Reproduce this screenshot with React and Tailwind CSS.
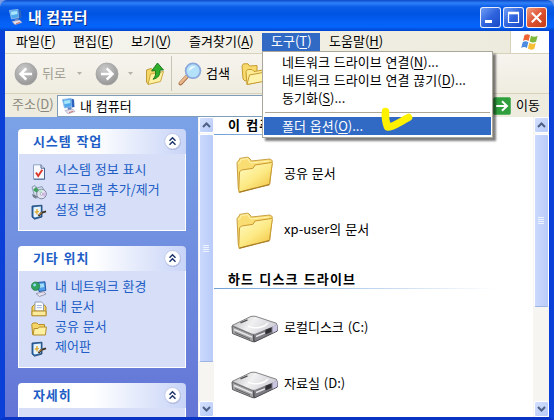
import React from "react";

const Key = ({ children }) => (
  <>
    (<span className="underline underline-offset-2 decoration-1">{children}</span>)
  </>
);

/* ---------- icons ---------- */

const ComputerIcon = ({ className }) => (
  <svg viewBox="0 0 14 16" className={className}>
    <path d="M0.5 1.5 L9 0.5 L10 8.5 L2.5 10 Z" fill="#4fa8ec" stroke="#8db9ea" />
    <path d="M2 2.8 L8 2 L8.6 5 L2.4 6.2 Z" fill="#a7e6fb" />
    <path d="M9.5 0.5 L12 1.5 L12.5 9 L10 9.5 Z" fill="#2d63bd" />
    <path d="M5.5 9.5 L9.5 9 L9.5 12 L6 12.5 Z" fill="#5b86c9" />
    <path d="M3 12.5 L10.5 11 L13 13.5 L6 15.7 Z" fill="#e3e1ec" stroke="#9a93b0" strokeWidth="0.6" />
    <path d="M7 14.6 l4 -1.2" stroke="#d55b4a" strokeWidth="0.8" />
  </svg>
);

const WindowsFlag = () => (
  <svg viewBox="0 0 20 18" className="w-5 h-[18px]">
    <path d="M4.4 2.2 C6.2 0.8 8 0.8 10 2.2 L8.6 8 C6.6 6.8 4.8 6.8 3 8 Z" fill="#ee6435" />
    <path d="M11 2.8 C13 4 15.2 4.2 17.6 2.8 L16.1 8.8 C14 10 11.8 9.8 9.6 8.6 Z" fill="#7fb83c" />
    <path d="M2.7 9.2 C4.6 8 6.5 8 8.3 9.2 L6.9 15 C5 13.7 3 13.8 1.2 15 Z" fill="#4c8be0" />
    <path d="M9.3 9.8 C11.3 11 13.5 11.2 15.8 9.9 L14.3 15.8 C12 17.1 10 16.8 7.9 15.6 Z" fill="#f8bf36" />
  </svg>
);

const NavCircle = ({ flip }) => (
  <svg viewBox="0 0 24 24" className="w-6 h-6 shrink-0">
    <defs>
      <radialGradient id="navGray" cx="40%" cy="30%" r="75%">
        <stop offset="0" stopColor="#cccccc" />
        <stop offset="1" stopColor="#929292" />
      </radialGradient>
    </defs>
    <circle cx="12" cy="12" r="11" fill="url(#navGray)" stroke="#a5a5a5" strokeWidth="0.8" />
    <path
      d="M18 12 H7.5 M12.3 6.4 L6.6 12 L12.3 17.6"
      transform={flip ? "rotate(180 12 12)" : undefined}
      fill="none"
      stroke="#fff"
      strokeWidth="2.6"
    />
  </svg>
);

const SmallCaret = ({ className }) => (
  <svg viewBox="0 0 5 3" className={`w-[5px] h-[3px] shrink-0 ${className}`}>
    <path d="M0 0 H5 L2.5 3 Z" fill="#b5b3a8" />
  </svg>
);

const UpFolderIcon = () => (
  <svg viewBox="0 0 20 24" className="w-5 h-6 shrink-0">
    <path d="M1.5 8 L6 6.5 L8 8 L14 7 L14 19 L3 22 L1.5 20 Z" fill="#f6d765" stroke="#b9922b" strokeWidth="0.9" />
    <path d="M3 22.5 L5.5 12 L18.5 9.5 L15.5 19.5 Z" fill="#fdf0a0" stroke="#c79f35" strokeWidth="0.9" />
    <path d="M12.5 1 L18.5 8 L15 8 C15.4 13 13 16.3 8 17.2 C10.6 14.6 11 12 10.4 8.6 L6.6 9 Z" fill="#2fae2b" stroke="#16721a" strokeWidth="0.9" />
  </svg>
);

const SearchIcon = () => (
  <svg viewBox="0 0 24 24" className="w-6 h-6 shrink-0">
    <path d="M2.6 21.4 L8.6 14.8" stroke="#a9744c" strokeWidth="4" strokeLinecap="round" />
    <path d="M2.6 20.8 L8.4 14.6" stroke="#eab88a" strokeWidth="2.6" strokeLinecap="round" />
    <circle cx="15" cy="8.8" r="7.4" fill="#b5e2fb" stroke="#8ba8dc" strokeWidth="1.7" />
    <path d="M10.5 9 C11 5 14 3.6 17.5 4.6 C15 6 13 7.5 10.5 9 Z" fill="#effaff" />
  </svg>
);

const FoldersIcon = () => (
  <svg viewBox="0 0 24 24" className="w-6 h-6 shrink-0">
    <path d="M1 4 L2.5 1.8 H7 L8.5 4 L16 3.5 V16 L4 19 L2 17 Z" fill="#f8da6c" stroke="#c69b31" />
    <path d="M5 9.5 L6.5 7.5 H11 L13 9.5 L22 8 V19 L6 22.5 Z" fill="#fdeb94" stroke="#c69b31" />
    <path d="M8.5 13 L22 10.5 V19.5 L6 22.5 Z" fill="#fff3ab" stroke="#c69b31" />
  </svg>
);

const GoIcon = () => (
  <svg viewBox="0 0 18 18" className="w-[18px] h-[18px] shrink-0">
    <rect x="0.5" y="0.5" width="17" height="17" rx="1.5" fill="#2f9e3c" stroke="#5db566" />
    <path d="M3 9 H13.5 M9 4.2 L14 9 L9 13.8" fill="none" stroke="#fff" strokeWidth="2" />
  </svg>
);

const FolderLarge = () => (
  <svg viewBox="0 0 38 38" className="w-[38px] h-[38px] shrink-0">
    <defs>
      <linearGradient id="folderFront" x1="0" y1="0" x2="0.8" y2="1">
        <stop offset="0" stopColor="#fffbc6" />
        <stop offset="0.55" stopColor="#fdea86" />
        <stop offset="1" stopColor="#f2c545" />
      </linearGradient>
    </defs>
    <path d="M1 6.5 L3.2 4 L3.7 2.4 L11.5 1.2 L13.3 2 L15.5 5 L34 3 L36.3 4.7 L33.8 28 L3.5 35 L2.3 33 Z" fill="#f9dc72" stroke="#c8a044" />
    <path d="M2 8 L4.5 6 L5 3.5 L11.5 2.6 L14.5 7 L33 5" fill="none" stroke="#fff4b5" />
    <path d="M3.5 16 L5.5 14 L17 12.3 L19 9 L35.5 6.5 L36.3 7.5 L33.3 28.5 L3 36.4 L2.8 33 Z" fill="url(#folderFront)" stroke="#c99b32" />
    <path d="M3.5 36.2 L33.3 28.6" stroke="#a87e28" strokeWidth="1.2" />
  </svg>
);

const DriveIcon = () => (
  <svg viewBox="0 0 48 28" className="w-12 h-7 shrink-0">
    <defs>
      <linearGradient id="driveTop" x1="0" y1="0" x2="1" y2="0.3">
        <stop offset="0" stopColor="#b9b9bb" />
        <stop offset="0.5" stopColor="#f1f1f2" />
        <stop offset="1" stopColor="#d2d1d8" />
      </linearGradient>
    </defs>
    <path d="M1 11 L22.5 20 L22.5 27 L20 26 L1.5 18.5 Z" fill="#a3a3a5" stroke="#5c5c5e" />
    <path d="M22.5 19.5 L46 10 L46.4 16 L23.5 27 Z" fill="#7d7c82" stroke="#4c4b51" />
    <path d="M1 10.5 L20 1.4 L24 1.2 L45.5 8.3 L46 10.2 L24 19.4 L21 19.2 Z" fill="url(#driveTop)" stroke="#77777b" strokeWidth="0.9" />
    <path d="M3 14.5 L21 22.2 M25 21.5 L34 17.8" stroke="#e8e8ea" strokeWidth="1.4" />
    <path d="M4 17.6 L19 24" stroke="#515153" strokeWidth="0.8" />
    <path d="M34.5 14.8 L40.5 12.4 V16.8 L34.5 19.6 Z" fill="#2e2d34" />
    <path d="M41.5 11.5 L46 9.7 L46.4 15.4 L41.5 18 Z" fill="#cbc5e2" />
    <path d="M9.5 7.9 L16.5 4.9" stroke="#4d4d50" strokeWidth="1.2" />
    <path d="M17 11 C23 15 34 12 37 8" fill="none" stroke="#fff" strokeWidth="1.3" />
  </svg>
);

const CheckDocIcon = () => (
  <svg viewBox="0 0 16 16" className="w-4 h-4 shrink-0">
    <path d="M2.5 0.8 H10 L13.5 4.2 V15.2 H2.5 Z" fill="#f7faff" stroke="#8fa3c4" />
    <path d="M10 0.8 V4.2 H13.5 L13.5 15.2 H3" fill="none" stroke="#4c6391" />
    <path d="M5 8.5 L7.2 12 L11.3 5.8" fill="none" stroke="#dc3a2d" strokeWidth="2" />
  </svg>
);

const ProgramsIcon = () => (
  <svg viewBox="0 0 16 16" className="w-4 h-4 shrink-0">
    <path d="M1 3 L4 1.5 L6 4 L11 2.5 L13 6 L11 13 L4 14 Z" fill="#d3dfee" stroke="#7b8ba5" strokeWidth="0.8" />
    <path d="M2 6 L5 3 L8 6 L6 9 Z" fill="#3fa05a" />
    <path d="M1 10 L6 12 L5 14.5 L2 13 Z" fill="#737b8c" />
    <circle cx="10.5" cy="10" r="4.8" fill="#e4e4f1" stroke="#747c97" strokeWidth="0.9" />
    <path d="M10.5 10 L14.5 8 A4.6 4.6 0 0 1 13.5 13 Z" fill="#d4b9e6" />
    <path d="M10.5 10 L7 7.5 A4.6 4.6 0 0 1 11 5.6 Z" fill="#b9e5c9" />
    <circle cx="10.5" cy="10" r="1.3" fill="#fff" stroke="#868ca4" strokeWidth="0.6" />
  </svg>
);

const ControlPanelIcon = () => (
  <svg viewBox="0 0 16 16" className="w-4 h-4 shrink-0">
    <path d="M1 2 L11 1.2 V13 L3.5 15.2 L1 13 Z" fill="#2f6cab" stroke="#1a3f70" strokeWidth="0.8" />
    <path d="M2.5 3.2 L9.8 2.6 V12 L3.8 13.6 L2.5 12.4 Z" fill="#e8f4fc" />
    <path d="M6 5 V10.5 M3.8 8 L8 7.6" stroke="#e0ad3a" strokeWidth="1.4" />
    <path d="M7.5 12 L10.5 8.8 L15 7.4" fill="none" stroke="#3d3428" strokeWidth="2" />
    <path d="M8 11 L11 8.4" stroke="#cf8a35" strokeWidth="1" />
  </svg>
);

const NetworkIcon = () => (
  <svg viewBox="0 0 16 16" className="w-4 h-4 shrink-0">
    <path d="M6 1.5 L14 0.8 L14.8 9.5 L8 10.5 Z" fill="#4c9fe8" stroke="#234f9d" strokeWidth="0.9" />
    <path d="M8 3 L12.8 2.5 L13.2 6 L8.5 7 Z" fill="#a5defa" />
    <circle cx="4.6" cy="5.2" r="4.2" fill="#31a261" stroke="#24784e" strokeWidth="0.7" />
    <path d="M2 4 C3.5 1.5 5.5 2.8 5 4.4 C4 6 2.6 5.6 2 4 Z" fill="#8fdcf2" />
    <path d="M5 12.6 L12.5 10.8 L15 13 L8.5 15.5 Z" fill="#e6e3f0" stroke="#8c88a6" strokeWidth="0.8" />
  </svg>
);

const DocumentsIcon = () => (
  <svg viewBox="0 0 16 16" className="w-4 h-4 shrink-0">
    <path d="M1 6 L3.5 3.5 H13 L15 6 V14.5 H1 Z" fill="#f6d564" stroke="#b08a28" />
    <path d="M4 1 H10.5 L12.5 3 V10 H4 Z" fill="#fff" stroke="#8395b5" strokeWidth="0.9" />
    <path d="M5.8 4.5 H10.8 M5.8 6.7 H10.8" stroke="#9fb6db" />
    <path d="M1 10 H15 V14.8 H1 Z" fill="#fceb9a" stroke="#b08a28" />
  </svg>
);

const FolderSmall = () => (
  <svg viewBox="0 0 16 16" className="w-4 h-4 shrink-0">
    <path d="M0.8 3.5 L2 2 H6 L7.5 3.5 H13.5 V13.5 H1.6 Z" fill="#f5d566" stroke="#b58d2a" />
    <path d="M3.2 7.5 H7 L8.3 6 H15.4 L14.4 14 H2 Z" fill="#fdf0a0" stroke="#b58d2a" />
  </svg>
);

/* ---------- window chrome ---------- */

const TitleButton = ({ close, children }) => (
  <div
    className={`w-[21px] h-[21px] rounded-[3px] border border-white/90 flex items-center justify-center bg-gradient-to-br ${
      close ? "from-[#ee9a7c] via-[#dd5230] to-[#c33c16]" : "from-[#6f9df5] via-[#2f63de] to-[#1a49c4]"
    }`}
  >
    <svg viewBox="0 0 19 19" className="w-[19px] h-[19px]">
      {children}
    </svg>
  </div>
);

const TitleBar = () => (
  <div className="h-[31px] shrink-0 flex items-center pl-[9px] pr-[7px] pt-[3px] rounded-t-[7px] bg-[linear-gradient(180deg,#0a48c8_0,#2f80f8_3px,#0a5ce6_7px,#0054e3_14px,#0560f5_22px,#0464fb_27px,#0043cb_31px)]">
    <ComputerIcon className="w-[14px] h-4 shrink-0" />
    <span className="ml-[5px] text-white font-bold text-[15px] leading-5 [text-shadow:1px_1px_0_#0a2f8c]">내 컴퓨터</span>
    <div className="ml-auto flex gap-[2px]">
      <TitleButton>
        <path d="M4 13.5 H11" stroke="#fff" strokeWidth="3" />
      </TitleButton>
      <TitleButton>
        <path d="M4.5 5 H14.5 V14.5 H4.5 Z" fill="none" stroke="#fff" strokeWidth="1.2" />
        <path d="M4 5 H15" stroke="#fff" strokeWidth="2.6" />
      </TitleButton>
      <TitleButton close>
        <path d="M4.8 4.8 L14.2 14.2 M14.2 4.8 L4.8 14.2" stroke="#fff" strokeWidth="2.1" />
      </TitleButton>
    </div>
  </div>
);

const ToolsMenu = () => (
  <div className="absolute left-0 top-[18px] z-10 w-[231px] h-[87px] bg-white border border-[#aca899] shadow-[3px_3px_2px_rgba(0,0,0,0.5)] pt-px px-px text-black">
    <div className="pl-[18px] h-[18px] leading-[18px]">네트워크 드라이브 연결<Key>N</Key>...</div>
    <div className="pl-[18px] h-[18px] leading-[18px]">네트워크 드라이브 연결 끊기<Key>D</Key>...</div>
    <div className="pl-[18px] h-[18px] leading-[18px]">동기화<Key>S</Key>...</div>
    <div className="mt-[5px] mb-1 mx-px h-px bg-[#aca899]" />
    <div className="pl-[18px] h-[18px] leading-[17px] bg-[#316ac5] text-white">폴더 옵션<Key>O</Key>...</div>
    {/* hand-drawn highlight tick */}
    <svg viewBox="0 0 36 30" className="absolute left-[115px] top-[53px] w-9 h-[30px]">
      <path d="M7.5 6.5 C7 12 8 18 9.5 22 C14 22.5 20 18 30.5 12.5" fill="none" stroke="#fff200" strokeWidth="7.5" strokeLinecap="round" strokeLinejoin="round" />
    </svg>
  </div>
);

const MenuBar = () => (
  <div className="h-[23px] shrink-0 flex bg-gradient-to-r from-[#f6f5f0] to-[#eceadb] border-b border-[#d8d2bd]">
    <div className="flex pt-[2px] leading-4 whitespace-nowrap">
      <span className="w-[57px] ml-[11px]">파일<Key>F</Key></span>
      <span className="w-[58px]">편집<Key>E</Key></span>
      <span className="w-[58px]">보기<Key>V</Key></span>
      <span className="w-[73px]">즐겨찾기<Key>A</Key></span>
      <div className="relative w-[58px] h-[18px] pl-[9px] bg-[#316ac5] text-white">
        도구<Key>T</Key>
        <ToolsMenu />
      </div>
      <span className="ml-[9px]">도움말<Key>H</Key></span>
    </div>
    <div className="ml-auto w-[39px] bg-white border-l border-[#d8d2bd] flex items-center justify-center">
      <WindowsFlag />
    </div>
  </div>
);

const ToolBar = () => (
  <div className="h-10 shrink-0 flex items-center pl-[9px] bg-gradient-to-b from-[#f6f4ee] to-[#efece0] border-b border-[#d8d2bd] whitespace-nowrap">
    <NavCircle />
    <span className="ml-1 -mt-[2px] text-[#a19f94]">뒤로</span>
    <SmallCaret className="ml-[11px]" />
    <span className="w-[13px]" />
    <NavCircle flip />
    <SmallCaret className="ml-[9px]" />
    <span className="w-3" />
    <UpFolderIcon />
    <div className="ml-[6px] w-px h-[35px] bg-[#c9c5b4]" />
    <span className="w-[6px]" />
    <SearchIcon />
    <span className="ml-1 -mt-[2px]">검색</span>
    <span className="w-[11px]" />
    <FoldersIcon />
  </div>
);

const AddressBar = () => (
  <div className="h-[23px] shrink-0 flex items-center bg-[#eeebdf] whitespace-nowrap">
    <span className="w-[52px] pl-[7px] pb-[3px] text-[#8a887c]">주소<Key>D</Key></span>
    <div className="flex-1 h-[22px] bg-white border border-[#7f9db9] flex items-center pl-1">
      <ComputerIcon className="w-[14px] h-4 shrink-0" />
      <span className="ml-[4px]">내 컴퓨터</span>
    </div>
    <div className="ml-[3px] w-[56px] flex items-center gap-[5px]">
      <GoIcon />
      <span className="-mt-px">이동</span>
    </div>
  </div>
);

/* ---------- scroll bars ---------- */

const ScrollButton = ({ down }) => (
  <div className="w-[15px] h-4 shrink-0 rounded-[2px] border border-white bg-gradient-to-br from-[#d4e0fd] to-[#b6c9f7] flex items-center justify-center">
    <svg viewBox="0 0 9 6" className={`w-[9px] h-[6px] ${down ? "rotate-180" : ""}`}>
      <path d="M1 5 L4.5 1.5 L8 5" fill="none" stroke="#4d6185" strokeWidth="2" />
    </svg>
  </div>
);

const ScrollBar = ({ thumb }) => (
  <div className="w-4 shrink-0 h-full flex flex-col items-center bg-[#f6f5f1]">
    <ScrollButton />
    <div
      className={`w-[15px] mt-px rounded-[2px] border border-white border-b-[#9ab4e4] bg-gradient-to-r from-[#cbd9fd] to-[#b9cbf8] flex flex-col items-center justify-center gap-px ${thumb}`}
    >
      <i className="w-[6px] h-px bg-[#eef4fe]" />
      <i className="w-[6px] h-px bg-[#eef4fe]" />
      <i className="w-[6px] h-px bg-[#eef4fe]" />
      <i className="w-[6px] h-px bg-[#eef4fe]" />
    </div>
    <div className="mt-auto">
      <ScrollButton down />
    </div>
  </div>
);

/* ---------- task pane ---------- */

const TaskBox = ({ title, items, body }) => (
  <div className="w-[168px]">
    <div className="h-[25px] rounded-t-[4px] bg-gradient-to-r from-white from-45% to-[#c8d4f7] flex items-center pl-[15px] pr-1">
      <span className="-mt-[2px] font-bold tracking-[0.9px] text-[#215dc6]">{title}</span>
      <svg viewBox="0 0 19 19" className="ml-auto w-[19px] h-[19px]">
        <circle cx="10" cy="10" r="8" fill="#a9b5da" />
        <circle cx="9.5" cy="9.3" r="7.8" fill="#fff" stroke="#b9c3e3" strokeWidth="0.8" />
        <path d="M6.5 8.8 L9.5 5.8 L12.5 8.8 M6.5 12.8 L9.5 9.8 L12.5 12.8" fill="none" stroke="#20376e" strokeWidth="1.5" />
      </svg>
    </div>
    <div className={`border border-t-0 border-white bg-[#d6dff7] pt-[6px] pl-3 ${body}`}>
      {items.map(([Icon, label]) => (
        <div key={label} className="h-5 flex items-center gap-2 text-[#215dc6]">
          <span className="pt-1"><Icon /></span>
          <span className="-mt-[3px]">{label}</span>
        </div>
      ))}
    </div>
  </div>
);

const systemTasks = [
  [CheckDocIcon, "시스템 정보 표시"],
  [ProgramsIcon, "프로그램 추가/제거"],
  [ControlPanelIcon, "설정 변경"],
];

const otherPlaces = [
  [NetworkIcon, "내 네트워크 환경"],
  [DocumentsIcon, "내 문서"],
  [FolderSmall, "공유 문서"],
  [ControlPanelIcon, "제어판"],
];

const TaskPane = () => (
  <div className="w-[193px] shrink-0 h-full overflow-hidden bg-gradient-to-b from-[#7ba2e7] to-[#6375d6] pl-[13px] pt-3 flex flex-col gap-[15px] whitespace-nowrap">
    <TaskBox title="시스템 작업" items={systemTasks} body="h-[77px]" />
    <TaskBox title="기타 위치" items={otherPlaces} body="h-[97px]" />
    <TaskBox title="자세히" items={[]} body="h-[40px]" />
  </div>
);

/* ---------- file list ---------- */

const GroupHeader = ({ children }) => (
  <div>
    <div className="pl-[14px] h-[17px] leading-[15px] font-bold tracking-[1.15px]">{children}</div>
    <div className="w-[283px] h-px bg-gradient-to-r from-[#70a0d8] to-white" />
  </div>
);

const Item = ({ icon, children }) => (
  <div className="h-14 flex items-center">
    <div className="w-[70px] pl-[17px] flex">{icon}</div>
    <span className="-mt-1">{children}</span>
  </div>
);

const FileList = () => (
  <div className="flex-1 h-full overflow-hidden bg-white whitespace-nowrap">
    <GroupHeader>이 컴퓨</GroupHeader>
    <div className="pt-3">
      <Item icon={<span className="ml-[5px]"><FolderLarge /></span>}>공유 문서</Item>
      <Item icon={<span className="ml-[5px]"><FolderLarge /></span>}>xp-user의 문서</Item>
    </div>
    <div className="pt-3">
      <GroupHeader>하드 디스크 드라이브</GroupHeader>
    </div>
    <div className="pt-3">
      <Item icon={<DriveIcon />}>로컬디스크 (C:)</Item>
      <Item icon={<DriveIcon />}>자료실 (D:)</Item>
    </div>
  </div>
);

function App() {
  return (
    <div className="w-[554px] h-[420px] overflow-hidden flex flex-col bg-[#7d9be0] text-[13px] leading-4 text-black [word-spacing:1px] font-['Noto_Sans_CJK_KR','Liberation_Sans',sans-serif]">
      <TitleBar />
      <div className="flex-1 min-h-0 flex flex-col border-x-[5px] border-b-[3px] border-[#0a3fd8] border-b-[#0a35c4]">
        <MenuBar />
        <ToolBar />
        <AddressBar />
        <div className="flex-1 min-h-0 flex">
          <TaskPane />
          <ScrollBar thumb="h-[228px]" />
          <FileList />
          <ScrollBar thumb="h-[173px]" />
        </div>
      </div>
    </div>
  );
}

export default App;
